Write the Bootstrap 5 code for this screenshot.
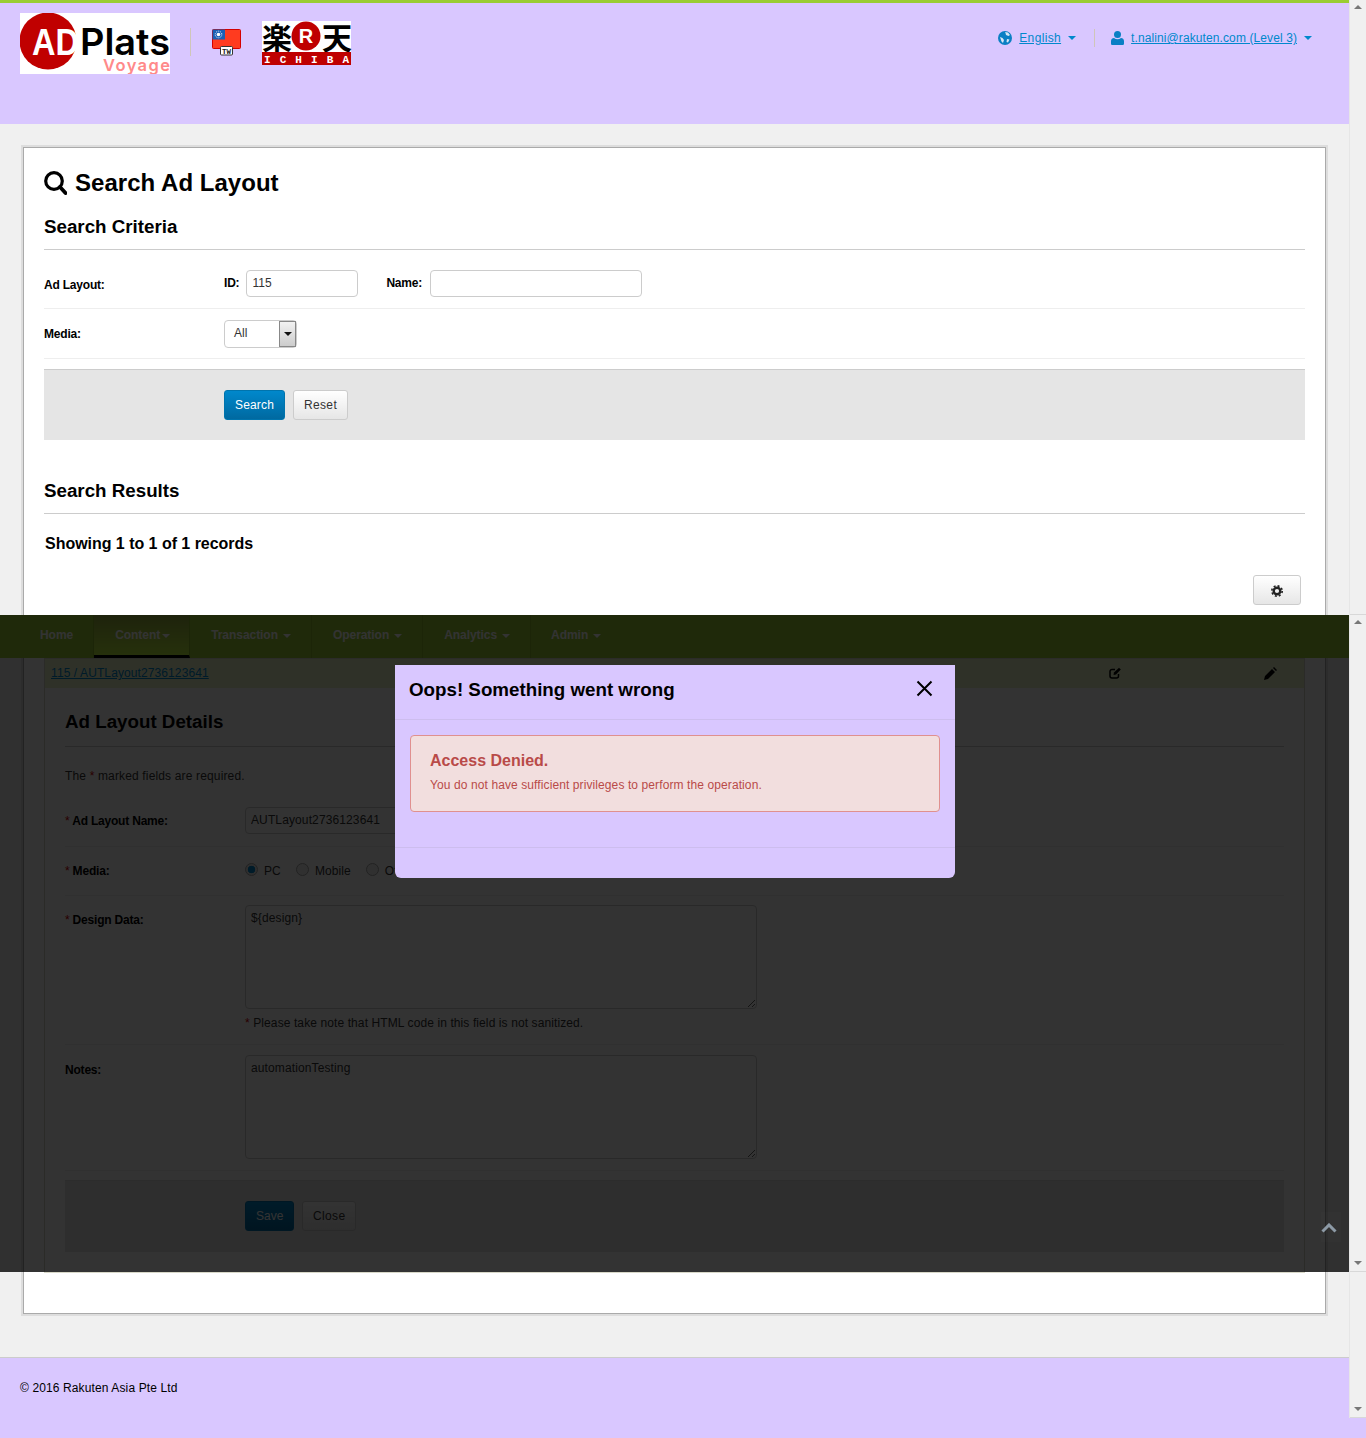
<!doctype html>
<html lang="en">
<head>
  <meta charset="utf-8" />
  <meta name="viewport" content="width=device-width, initial-scale=1" />
  <title>Search Ad Layout</title>
  <link href="https://cdn.jsdelivr.net/npm/bootstrap@5.3.0/dist/css/bootstrap.min.css" rel="stylesheet" />
  <style>
    body {
      background: #d9c7ff;
      color: #000;
      font-family: "Liberation Sans", Arial, sans-serif;
      font-size: 12px;
      line-height: 18px;
      letter-spacing: .1px;
      position: relative;
      min-height: 1438px;
    }
    a { color: #0088cc; }

    /* header */
    .top-head {
      background: #d9c7ff;
      border-top: 3px solid #9acd32;
      height: 124px;
      width: 1349px;
      padding: 10px 37px 0 20px;
    }
    .logo-box { width: 150px; height: 61px; display: block; letter-spacing: 0; }
    .head-sep { width: 1px; height: 28px; background: #cfc6b8; margin: 15px 21px 0 20px; }
    .flag-box { display: block; width: 29px; height: 27px; margin: 16px 21px 0 0; letter-spacing: 0; }
    .ichiba-box { display: block; width: 89px; height: 44px; margin-top: 8px; overflow: visible; letter-spacing: 0; }
    .head-links { margin-top: 16px; line-height: 18px; }
    .head-links svg { margin-right: 7px; }
    .lang-link { letter-spacing: .35px; }
    .head-sep2 { width: 1px; height: 18px; background: #cfc6b8; margin: 0 16px 0 18px; }
    .caret-mark {
      display: inline-block;
      width: 0; height: 0;
      border-left: 4px solid transparent;
      border-right: 4px solid transparent;
      border-top: 4px solid currentColor;
    }
    .caret-link { color: #0088cc; margin-left: 7px; }

    /* main card */
    .page-main { width: 1349px; padding: 23px 23px 43px; background: #f0f0f0; }
    .main-box {
      background: #fff;
      border: 1px solid #aaa;
      box-shadow: 0 0 0 2px #ddd;
      padding: 20px 20px 40px;
    }
    .page-title { font-size: 24px; line-height: 30px; font-weight: 700; margin: 0; gap: 8px; letter-spacing: .03px; }
    .sect-title {
      font-size: 18.75px; line-height: 24px; font-weight: 700; margin: 17px 0 0;
      padding-bottom: 10px; border-bottom: 1px solid #ccc; letter-spacing: 0;
    }
    .form-line { border-bottom: 1px solid #eee; }
    .line-a { padding: 20px 0 11px; }
    .line-b { padding: 11px 0 10px; }
    .line-label { width: 180px; font-weight: 700; flex: none; letter-spacing: -.2px; }
    .line-a .line-label { padding-top: 6px; }
    .line-b .line-label { padding-top: 5px; }
    .mini-label { font-weight: 700; margin-right: 7px; line-height: 26px; letter-spacing: -.2px; }
    .mini-name { margin-right: 8px; }
    .fld.form-control {
      font-size: 12px;
      line-height: 18px;
      letter-spacing: .12px;
      color: #333;
      padding: 2px 5px 4px;
      height: 27px;
      border: 1px solid #ccc;
      border-radius: 4px;
      min-height: 0;
      box-shadow: none;
    }
    textarea.fld.form-control { height: 104px; width: 512px; padding: 3px 5px; }
    .sel-box {
      width: 73px; height: 28px;
      border: 1px solid #ccc; border-radius: 4px;
      background: #fff; color: #333;
      padding: 3px 0 0 9px;
      position: relative;
    }
    .sel-arrow {
      position: absolute; right: 0; top: 0; bottom: 0; width: 17px;
      border: 1px solid #888; background: linear-gradient(#f2f2f2, #ccc);
      color: #111;
    }
    .btn-bar { background: #e5e5e5; border-top: 1px solid #ccc; margin-top: 10px; padding: 20px 0 20px 180px; gap: 8px; }
    .btn.btn-blue, .btn.btn-soft { font-size: 12px; line-height: 18px; height: 30px; padding: 5px 10px; border-radius: 3px; }
    .btn.btn-blue { background: linear-gradient(#0088cc, #0069a0); border: 1px solid #0074ad; color: #fff; letter-spacing: .16px; }
    .btn.btn-soft { background: linear-gradient(#fff, #e6e6e6); border: 1px solid #ccc; color: #333; letter-spacing: .35px; }
    .res-title { margin-top: 39px; }
    .rec-count { font-size: 16px; line-height: 22px; font-weight: 700; margin: 19px 0 0 1px; letter-spacing: -.03px; }
    .gear-row { margin: 20px 4px 0 0; }
    .btn.btn-gear { width: 48px; padding: 0; }

    /* details panel, sits under the backdrop */
    .det-panel { border: 1px solid #d8d8c8; margin-top: 53px; }
    .det-head { background: #ecf4c8; height: 29px; padding: 5px 6px 0; position: relative; }
    .det-head a { line-height: 18px; }
    .det-ico1 { position: absolute; left: 1064px; top: 8px; }
    .det-ico2 { position: absolute; left: 1219px; top: 8px; }
    .det-body { padding: 22px 20px 20px; }
    .det-title { font-size: 18.75px; line-height: 24px; font-weight: 700; margin: 0; padding-bottom: 12px; border-bottom: 1px solid #ccc; letter-spacing: 0; }
    .req-note { margin-top: 20px; color: #333; letter-spacing: .15px; }
    .req-star { color: #c00; font-weight: 400; }
    .d-line1 { padding: 22px 0 12px; }
    .d-line2 { padding: 15px 0 15px; }
    .d-line3 { padding: 9px 0 12px; }
    .d-line4 { padding: 10px 0 11px; }
    .d-line1 .line-label { padding-top: 5px; }
    .d-line3 .line-label { padding-top: 6px; }
    .d-line4 .line-label { padding-top: 6px; }
    .fld-name { width: 512px; }
    .radio-item { color: #333; margin-right: 15px; gap: 6px; }
    .radio-dot.form-check-input {
      width: 13px; height: 13px; margin: 0 0 4px; border: 1px solid #aaa;
      background-color: #eee; box-shadow: none;
    }
    .radio-dot.form-check-input:checked {
      background-color: #e4e4e4;
      background-image: radial-gradient(circle, #0088cc 45%, transparent 52%);
      border-color: #aaa;
    }
    .fld-note { margin-top: 5px; color: #333; }
    .det-bar { background: #e5e5e5; border-top: 1px solid #ddd; margin-top: 9px; padding: 20px 0 21px 180px; gap: 8px; }
    .det-bar .btn-blue { letter-spacing: 0; width: 49px; }

    /* overlay strip with nav, backdrop and dialog */
    .shade-wrap { position: absolute; left: 0; top: 615px; width: 1349px; height: 657px; }
    .menu-bar {
      position: absolute; left: 0; top: 0; width: 100%; height: 43px;
      background: #9acd32; padding-left: 19px;
    }
    .menu-item {
      font-weight: 700; color: #fff; height: 43px; line-height: 40px;
      padding: 0 20px 0 21px; border-right: 1px solid #8ab82c; letter-spacing: -.05px;
      text-decoration: none; display: block; white-space: nowrap;
    }
    .menu-item:last-child { border-right: 0; margin-left: -1px; }
    .menu-item .caret-mark { margin-left: 5px; vertical-align: 1px; }
    .menu-item.menu-on {
      padding: 0 19px 0 21px; background: linear-gradient(#96ad3c, #bdf03c); border-bottom: 3px solid #000;
    }
    .menu-item.menu-on .caret-mark { margin-left: 2px; }
    .shade-layer { position: absolute; inset: 0; background: rgba(0, 0, 0, .8); }
    .modal-content.oops-box {
      position: absolute; left: 395px; top: 50px; width: 560px; height: 213px;
      background: #d9c7ff; border: 0; border-radius: 0 0 6px 6px; color: #000;
    }
    .oops-box .modal-header {
      height: 55px; padding: 0 15px 0 14px; border-bottom: 1px solid #cdbdee; border-radius: 0;
    }
    .oops-box .modal-title { font-size: 18.75px; line-height: 24px; font-weight: 700; margin-top: -4px; letter-spacing: 0; }
    .oops-box .modal-body { padding: 15px 15px 0; height: 127px; flex: none; }
    .oops-box .modal-footer { border-top: 1px solid #cdbdee; height: 31px; padding: 0; border-radius: 0; }
    .oops-close { background: none; border: 0; padding: 0; margin: -8px 7px 0 0; line-height: 0; }
    .alert.deny-box {
      background: #f2dede; border: 1px solid #e0908f; color: #b94a48; border-radius: 4px;
      padding: 15px 19px 15px; margin: 0; height: 77px;
    }
    .deny-title { font-size: 16px; line-height: 20px; font-weight: 700; margin: 0 0 5px; letter-spacing: 0; }
    .to-top {
      position: absolute; left: 1321px; top: 597px; width: 20px; height: 30px;
      background: rgba(255,255,255,.01); line-height: 0; padding-top: 11px;
    }

    /* fake window scrollbar */
    .scroll-strip { position: absolute; left: 1349px; top: 0; width: 17px; height: 1418px; background: #f0f0f0; border-left: 1px solid #e6e6e6; }
    .scroll-part { border-bottom: 1px solid #d8d8d8; padding: 5px 0 6px; }
    .scroll-tri {
      width: 0; height: 0; margin-left: 4px;
      border-left: 4px solid transparent; border-right: 4px solid transparent;
    }
    .tri-up { border-bottom: 4px solid #777; }
    .tri-down { border-top: 4px solid #777; }

    /* footer */
    .page-foot { background: #d9c7ff; border-top: 1px solid #ccc; height: 81px; padding: 21px 20px 0; letter-spacing: .12px; }
  </style>
</head>
<body>
  <header class="top-head d-flex align-items-start">
    <svg class="logo-box" viewBox="0 0 150 61">
      <rect width="150" height="61" fill="#fff"/>
      <circle cx="28" cy="28" r="28.5" fill="#c00000"/>
      <text x="12" y="42" font-family="Liberation Sans" font-weight="700" font-size="37" fill="#fff" textLength="47" lengthAdjust="spacingAndGlyphs">AD</text>
      <text x="60" y="42" font-family="Inter" font-weight="600" font-size="37" fill="#000" textLength="90" lengthAdjust="spacingAndGlyphs">Plats</text>
      <text x="83" y="58" font-family="Inter" font-weight="600" font-size="16.500" fill="#ff8a8a" textLength="67" lengthAdjust="spacing">Voyage</text>
    </svg>
    <div class="head-sep"></div>
    <svg class="flag-box" viewBox="0 0 29 27">
      <rect x=".5" y=".5" width="28" height="19" rx="1" fill="#ff3b1f" stroke="#d40000"/>
      <rect x=".5" y=".5" width="12.500" height="10" fill="#1a5fb4"/>
      <circle cx="6.500" cy="5.500" r="1.800" fill="#fff"/>
      <circle cx="6.500" cy="5.500" r="3.300" fill="none" stroke="#fff" stroke-dasharray="1 1.070"/>
      <rect x="8.500" y="17.500" width="12" height="8.500" rx="1" fill="#fff" stroke="#333"/>
      <text x="14.500" y="24.500" text-anchor="middle" font-family="Liberation Mono" font-weight="700" font-size="7.500" fill="#222">TW</text>
    </svg>
    <svg class="ichiba-box" viewBox="0 0 89 44">
      <rect width="89" height="31" fill="#fff"/>
      <text x="0" y="28" font-family="Noto Sans CJK JP" font-weight="700" font-size="30" fill="#000">楽</text>
      <circle cx="44" cy="15" r="14.500" fill="#bf0000"/>
      <text x="44" y="22" text-anchor="middle" font-family="Liberation Sans" font-weight="700" font-size="20" fill="#fff">R</text>
      <text x="60" y="28" font-family="Noto Sans CJK JP" font-weight="700" font-size="30" fill="#000">天</text>
      <rect y="31" width="89" height="13" fill="#bf0000"/>
      <text x="2" y="42" font-family="Liberation Mono" font-weight="700" font-size="11" fill="#fff" textLength="85">I C H I B A</text>
    </svg>
    <div class="head-links ms-auto d-flex align-items-center">
      <svg width="14" height="14" viewBox="0 0 14 14">
        <circle cx="7" cy="7" r="7" fill="#0a7fc4"/>
        <path d="M7 1l3 .5 2 2.500-1.500 1-2.500-1-.5-2zM2 6l2.500 1 1.500 2-1 3-1.500-1.500zM9 8l2.500.5-1.500 3-1.500-.5z" fill="#d6e6f5"/>
      </svg>
      <a class="lang-link" href="#">English</a>
      <span class="caret-mark caret-link"></span>
      <span class="head-sep2"></span>
      <svg width="13" height="14" viewBox="0 0 13 14">
        <circle cx="6.500" cy="3.500" r="3.500" fill="#0a7fc4"/>
        <path d="M0 12.500V10c0-2 1.500-3 3-3 1 .8 2.200 1.200 3.500 1.200S9 7.800 10 7c1.500 0 3 1 3 3v2.500c0 1-.7 1.500-1.500 1.500h-10C.7 14 0 13.500 0 12.500z" fill="#0a7fc4"/>
      </svg>
      <a href="#">t.nalini@rakuten.com (Level 3)</a>
      <span class="caret-mark caret-link"></span>
    </div>
  </header>

  <main class="page-main">
    <div class="main-box">
      <h1 class="page-title d-flex align-items-center">
        <svg width="23" height="24" viewBox="0 0 23 24"><circle cx="10" cy="10" r="8.300" fill="none" stroke="#000" stroke-width="3.200"/><path d="M16 16l5.500 6" stroke="#000" stroke-width="3.800" stroke-linecap="round"/></svg>
        Search Ad Layout
      </h1>
      <h2 class="sect-title">Search Criteria</h2>
      <div class="form-line line-a d-flex">
        <div class="line-label">Ad Layout:</div>
        <span class="mini-label">ID:</span>
        <input class="form-control fld me-4" style="width:112px" type="text" value="115" />
        <span class="mini-label mini-name ms-1">Name:</span>
        <input class="form-control fld" style="width:212px" type="text" />
      </div>
      <div class="form-line line-b d-flex">
        <div class="line-label">Media:</div>
        <div class="sel-box">All
          <span class="sel-arrow d-flex align-items-center justify-content-center"><span class="caret-mark"></span></span>
        </div>
      </div>
      <div class="btn-bar d-flex">
        <button class="btn btn-blue" type="button">Search</button>
        <button class="btn btn-soft" type="button">Reset</button>
      </div>

      <h2 class="sect-title res-title">Search Results</h2>
      <p class="rec-count">Showing 1 to 1 of 1 records</p>
      <div class="gear-row d-flex justify-content-end">
        <button class="btn btn-soft btn-gear" type="button">
          <svg width="12" height="12" viewBox="0 0 12 12"><circle cx="6" cy="6" r="3.300" fill="none" stroke="#222" stroke-width="2.400"/><circle cx="6" cy="6" r="5.200" fill="none" stroke="#222" stroke-width="1.600" stroke-dasharray="2 2.080"/></svg>
        </button>
      </div>

      <section class="det-panel">
        <div class="det-head">
          <a href="#">115 / AUTLayout2736123641</a>
          <svg class="det-ico1" width="12" height="12" viewBox="0 0 12 12"><path d="M9.500 7v2a2 2 0 0 1-2 2H3a2 2 0 0 1-2-2V4.500a2 2 0 0 1 2-2h3" fill="none" stroke="#000" stroke-width="1.500"/><path d="M4.500 8l.5-2.500L10 .7l1.800 1.800L7 7.500z" fill="#000"/></svg>
          <svg class="det-ico2" width="13" height="13" viewBox="0 0 13 13"><path d="M0 13l1-4 7-7 3 3-7 7zM9 1l1-1 3 3-1 1z" fill="#000"/></svg>
        </div>
        <div class="det-body">
          <h2 class="det-title">Ad Layout Details</h2>
          <div class="req-note">The <span class="req-star">*</span> marked fields are required.</div>
          <div class="form-line d-line1 d-flex">
            <div class="line-label"><span class="req-star">*</span> Ad Layout Name:</div>
            <input class="form-control fld fld-name" type="text" value="AUTLayout2736123641" />
          </div>
          <div class="form-line d-line2 d-flex">
            <div class="line-label"><span class="req-star">*</span> Media:</div>
            <label class="radio-item d-flex align-items-center"><input class="form-check-input radio-dot" type="radio" name="media" checked />PC</label>
            <label class="radio-item d-flex align-items-center"><input class="form-check-input radio-dot" type="radio" name="media" />Mobile</label>
            <label class="radio-item d-flex align-items-center"><input class="form-check-input radio-dot" type="radio" name="media" />Other</label>
          </div>
          <div class="form-line d-line3 d-flex">
            <div class="line-label"><span class="req-star">*</span> Design Data:</div>
            <div>
              <textarea class="form-control fld">${design}</textarea>
              <div class="fld-note"><span class="req-star">*</span> Please take note that HTML code in this field is not sanitized.</div>
            </div>
          </div>
          <div class="form-line d-line4 d-flex">
            <div class="line-label">Notes:</div>
            <textarea class="form-control fld">automationTesting</textarea>
          </div>
          <div class="det-bar d-flex">
            <button class="btn btn-blue" type="button">Save</button>
            <button class="btn btn-soft" type="button">Close</button>
          </div>
        </div>
      </section>
    </div>
  </main>

  <footer class="page-foot">© 2016 Rakuten Asia Pte Ltd</footer>

  <div class="shade-wrap">
    <nav class="menu-bar nav">
      <a class="menu-item" href="#">Home</a>
      <a class="menu-item menu-on" href="#">Content<span class="caret-mark"></span></a>
      <a class="menu-item" href="#">Transaction<span class="caret-mark"></span></a>
      <a class="menu-item" href="#">Operation<span class="caret-mark"></span></a>
      <a class="menu-item" href="#">Analytics<span class="caret-mark"></span></a>
      <a class="menu-item" href="#">Admin<span class="caret-mark"></span></a>
    </nav>
    <div class="shade-layer"></div>
    <div class="modal-content oops-box">
      <div class="modal-header justify-content-between">
        <h5 class="modal-title">Oops! Something went wrong</h5>
        <button class="oops-close" type="button" aria-label="Close">
          <svg width="17" height="17" viewBox="0 0 17 17"><path d="M1.500 1.500l14 14M15.500 1.500l-14 14" stroke="#000" stroke-width="2"/></svg>
        </button>
      </div>
      <div class="modal-body">
        <div class="alert deny-box">
          <div class="deny-title">Access Denied.</div>
          You do not have sufficient privileges to perform the operation.
        </div>
      </div>
      <div class="modal-footer"></div>
    </div>
    <div class="to-top">
      <svg width="16" height="10" viewBox="0 0 16 10"><path d="M1.500 8.500L8 2l6.500 6.500" fill="none" stroke="#8d9aa6" stroke-width="3"/></svg>
    </div>
  </div>

  <div class="scroll-strip d-flex flex-column">
    <div class="scroll-part" style="height:615px"><div class="scroll-tri tri-up"></div></div>
    <div class="scroll-part d-flex flex-column justify-content-between" style="height:657px"><div class="scroll-tri tri-up"></div><div class="scroll-tri tri-down"></div></div>
    <div class="scroll-part d-flex flex-column justify-content-end flex-grow-1"><div class="scroll-tri tri-down"></div></div>
  </div>

  <script src="https://cdn.jsdelivr.net/npm/bootstrap@5.3.0/dist/js/bootstrap.bundle.min.js"></script>
</body>
</html>
